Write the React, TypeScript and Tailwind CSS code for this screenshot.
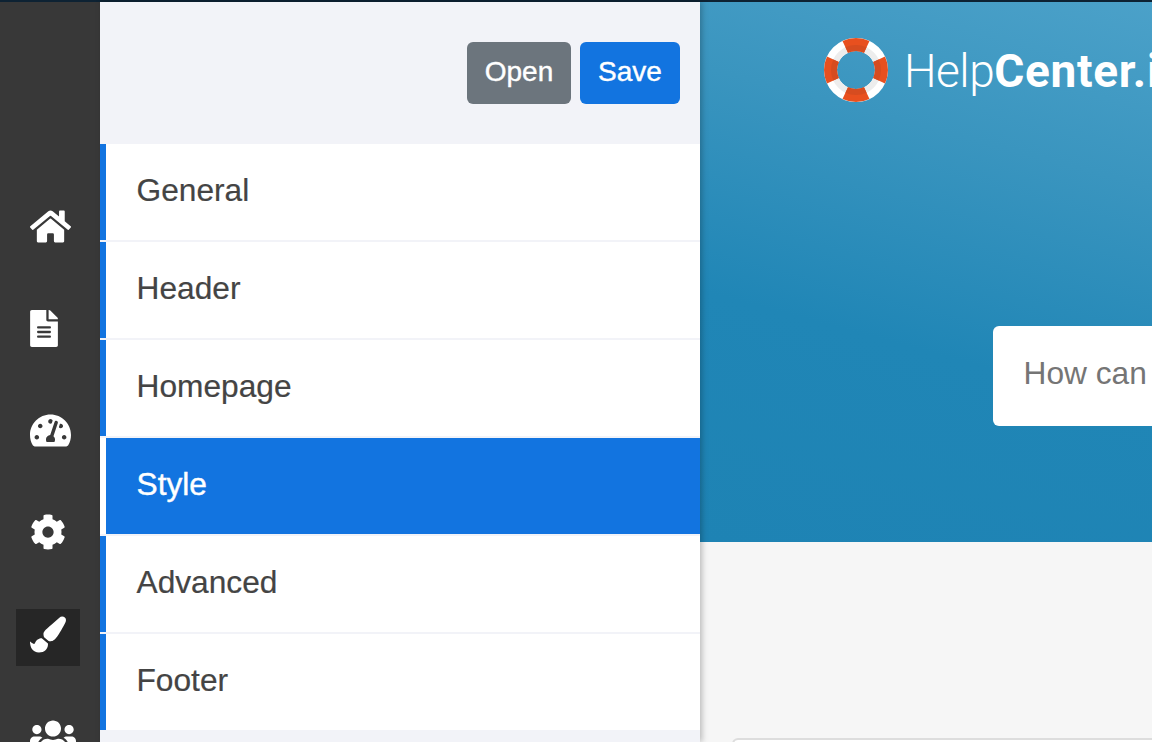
import React from 'react';
import { FaHome, FaFileAlt, FaTachometerAlt, FaCog, FaPaintBrush, FaUsers } from 'react-icons/fa';

const sideIcons = [
  { icon: FaHome, cls: 'w-[41px] h-[37px]', active: false },
  { icon: FaFileAlt, cls: 'w-[28px] h-[37px]', active: false },
  { icon: FaTachometerAlt, cls: 'w-[41px] h-[37px]', active: false },
  { icon: FaCog, cls: 'w-[36px] h-[36px]', active: false },
  { icon: FaPaintBrush, cls: 'w-[36px] h-[37px]', active: true },
  { icon: FaUsers, cls: 'w-[46px] h-[37px]', active: false },
];

const menuItems = ['General', 'Header', 'Homepage', 'Style', 'Advanced', 'Footer'];

// lifebuoy logo
const Logo = () => (
  <svg width="64" height="64" viewBox="0 0 64 64" className="shrink-0">
    <circle cx="32" cy="32" r="25.5" fill="none" stroke="#ffffff" strokeWidth="13" />
    <circle cx="32" cy="32" r="22" fill="none" stroke="#ededed" strokeWidth="6" />
    <circle cx="32" cy="32" r="25.5" fill="none" stroke="#e8501f" strokeWidth="13" pathLength="360" strokeDasharray="50 40" strokeDashoffset="25" />
    <circle cx="32" cy="32" r="22" fill="none" stroke="#d64c20" strokeWidth="6" pathLength="360" strokeDasharray="50 40" strokeDashoffset="25" />
  </svg>
);

const App: React.FC = () => {
  return (
    <div className="w-[1152px] h-[742px] overflow-hidden flex flex-col bg-[#10222f] font-['Liberation_Sans',sans-serif]">
      {/* dark strip above the window */}
      <div className="h-[2px] shrink-0 bg-[#0d2233]" />

      <div className="flex flex-1 min-h-0">
        {/* Icon rail */}
        <div className="w-[100px] shrink-0 bg-[#383838] flex flex-col pl-4 pt-[199px] gap-[45px]">
          {sideIcons.map(({ icon: Icon, cls, active }, i) => (
            <div
              key={i}
              className={`w-16 h-[57px] shrink-0 pl-[14px] text-white ${active ? 'bg-[#262626]' : ''}`}
            >
              <div className="h-[50px] flex items-center">
                <Icon className={cls} />
              </div>
            </div>
          ))}
        </div>

        {/* Settings panel */}
        <div className="w-[600px] shrink-0 bg-[#f2f3f8] relative z-10 shadow-[2px_0_6px_rgba(0,0,0,0.25)]">
          <div className="h-[142px] flex items-center justify-end gap-[9px] pr-5">
            <button className="w-[104px] h-[62px] pb-[2px] rounded-[6px] bg-[#6c757d] text-white text-[28px] [-webkit-text-stroke:0.4px_white]">
              Open
            </button>
            <button className="w-[100px] h-[62px] pb-[2px] rounded-[6px] bg-[#1274e0] text-white text-[28px] [-webkit-text-stroke:0.4px_white]">
              Save
            </button>
          </div>

          <div className="flex flex-col">
            {menuItems.map((item) => (
              <div key={item} className="h-[98px] bg-white border-b-2 border-[#f2f3f8]">
                <div
                  className={`h-24 flex items-center border-l-[6px] pl-[30.5px] pb-[2px] text-[31.7px] ${
                    item === 'Style'
                      ? 'border-white bg-[#1274e0] text-white [-webkit-text-stroke:0.4px_white]'
                      : 'border-[#1274e0] text-[#444444] [-webkit-text-stroke:0.2px_#444444]'
                  }`}
                >
                  {item}
                </div>
              </div>
            ))}
          </div>
        </div>

        {/* Page preview */}
        <div className="flex-1 min-w-0 bg-[#f6f6f6] overflow-hidden flex flex-col">
          <div className="h-[540px] shrink-0 bg-[linear-gradient(195deg,#4ba1c9_0%,#3a95bf_28%,#2086b6_62%,#1e83b4_100%)] flex flex-col">
            <div className="flex items-center gap-4 pl-[124px] pt-9 whitespace-nowrap">
              <Logo />
              <span className="font-['Roboto',sans-serif] text-white text-[46px] leading-none pt-[2px]">
                <span className="font-light tracking-[-0.5px]">Help</span>
                <span className="font-bold tracking-[0.7px]">Center.io</span>
              </span>
            </div>
            <div className="ml-[293px] mt-[224px] w-[700px] h-[100px] shrink-0 bg-white rounded-[6px] flex items-center pl-[30.5px] pb-[4px] text-[31.7px] text-[#757575] whitespace-nowrap">
              How can I help you?
            </div>
          </div>
          <div className="ml-[32px] mt-[196px] w-[800px] h-20 shrink-0 bg-white border-2 border-[#dddddd] rounded-[6px]" />
        </div>
      </div>
    </div>
  );
};

export default App;
